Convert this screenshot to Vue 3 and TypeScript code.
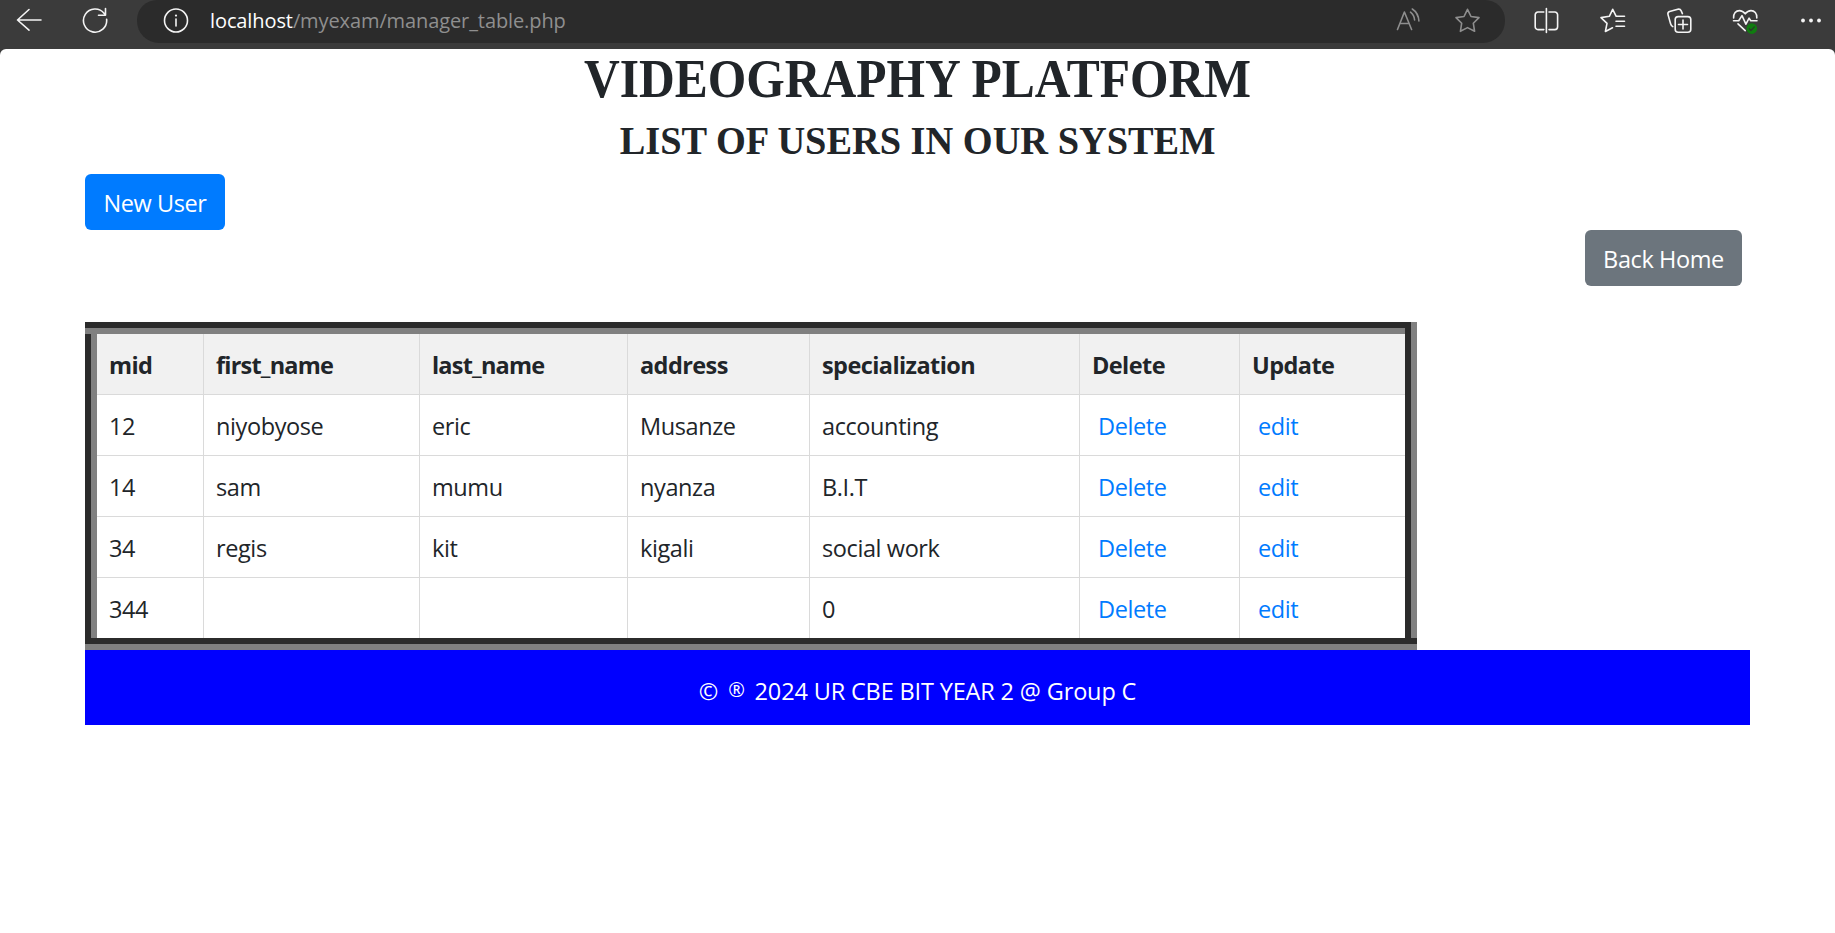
<script setup lang="ts">
interface Manager {
  mid: number
  firstName: string
  lastName: string
  address: string
  specialization: string
}

const columns: string[] = ['mid', 'first_name', 'last_name', 'address', 'specialization', 'Delete', 'Update']

const managers: Manager[] = [
  { mid: 12, firstName: 'niyobyose', lastName: 'eric', address: 'Musanze', specialization: 'accounting' },
  { mid: 14, firstName: 'sam', lastName: 'mumu', address: 'nyanza', specialization: 'B.I.T' },
  { mid: 34, firstName: 'regis', lastName: 'kit', address: 'kigali', specialization: 'social work' },
  { mid: 344, firstName: '', lastName: '', address: '', specialization: '0' },
]
</script>

<template>
  <div class="browser">
    <header class="toolbar">
      <div class="nav">
        <svg class="icon" viewBox="0 0 28 28"><path d="M14 3.5 2.5 14 14 24.2M2.5 14H26" /></svg>
        <svg class="icon" viewBox="0 0 28 28">
          <path d="M25.6 13.2A11.6 11.6 0 1 1 23.2 7.4L24.5 9.2M24.5 2.5V9.3H17.5" />
        </svg>
      </div>
      <div class="address">
        <svg class="icon" viewBox="0 0 28 28">
          <circle cx="14" cy="14.5" r="11.5" />
          <path d="M14 13v7" />
          <circle class="solid" cx="14" cy="9.6" r="1.1" />
        </svg>
        <span class="url"><span class="host">localhost</span>/myexam/manager_table.php</span>
        <svg class="icon dim" viewBox="0 0 28 28">
          <path d="M2.5 23.5 9.4 6 16.6 23.5M5 17.5h9.2M15.5 6.2Q19.3 9.3 19.6 14M17.3 3Q23.4 7 23.9 15" />
        </svg>
        <svg class="icon dim" viewBox="0 0 28 28">
          <path d="M13.5 3.3 17 10.5 25 11.6 19.3 17.2 20.6 25.3 13.5 21.6 6.4 25.3 7.7 17.2 2 11.6 10 10.5Z" />
        </svg>
      </div>
      <div class="actions">
        <svg class="icon" viewBox="0 0 28 28">
          <path d="M11.8 6H6a2.8 2.8 0 0 0-2.8 2.8v12A2.8 2.8 0 0 0 6 23.6h5.8M17 6h5.8a2.8 2.8 0 0 1 2.8 2.8v12a2.8 2.8 0 0 1-2.8 2.8H17M14.4 2.5v24" />
        </svg>
        <svg class="icon" viewBox="0 0 28 28">
          <path d="M14.5 21.8 7.4 25.5 9 17.3 3 11.6 11.3 10.3 14.7 3.3 18.2 10.3H26.5M18 15.2h8.5M18 20.2h8.5" />
        </svg>
        <svg class="icon" viewBox="0 0 28 28">
          <rect x="10.2" y="10.6" width="15.6" height="15.6" rx="3" />
          <path d="M18 14v9M13.5 18.5h9M7.8 20.6C6.6 20 6 19.2 5.6 17.8L3 8.6Q2.4 6.3 4.6 5.6L12.8 3.2Q15.2 2.6 16.2 4.8L17.4 7.6" />
        </svg>
        <svg class="icon" viewBox="0 0 28 28">
          <path d="M2.6 12C2.3 7.4 5 4.6 8.4 4.6 11 4.6 12.8 6 14.2 7.8 15.6 6 17.4 4.6 20 4.6c3.4 0 6.1 2.8 5.8 7.4M2.5 14.8h5.2l3.3-5.2 3.9 8.6 3.2-6 1.7 2.6H26M7 17.8l7.2 6.8" />
          <circle class="badge" cx="20.8" cy="22.6" r="5.3" />
          <path class="check" d="m18.3 22.8 1.7 1.7 3.4-3.6" />
        </svg>
        <svg class="icon" viewBox="0 0 28 28">
          <circle class="solid" cx="6" cy="14.5" r="1.9" />
          <circle class="solid" cx="14" cy="14.5" r="1.9" />
          <circle class="solid" cx="22" cy="14.5" r="1.9" />
        </svg>
      </div>
    </header>

    <main class="page">
      <h1 class="title">VIDEOGRAPHY PLATFORM</h1>
      <h2 class="subtitle">LIST OF USERS IN OUR SYSTEM</h2>

      <div class="container">
        <a class="btn primary">New User</a>
        <div class="home-row"><a class="btn secondary">Back Home</a></div>

        <div class="frame">
          <table class="grid">
            <colgroup>
              <col v-for="(name, i) in columns" :key="name" :class="'col-' + i" />
            </colgroup>
            <thead>
              <tr>
                <th v-for="name in columns" :key="name" :class="{ tight: name.includes('_') }">{{ name }}</th>
              </tr>
            </thead>
            <tbody>
              <tr v-for="m in managers" :key="m.mid">
                <td>{{ m.mid }}</td>
                <td>{{ m.firstName }}</td>
                <td>{{ m.lastName }}</td>
                <td>{{ m.address }}</td>
                <td>{{ m.specialization }}</td>
                <td><a class="link">Delete</a></td>
                <td><a class="link">edit</a></td>
              </tr>
            </tbody>
          </table>
        </div>

        <footer class="footer">© <span class="reg">®</span> 2024 UR CBE BIT YEAR 2 @ Group C</footer>
      </div>
    </main>
  </div>
</template>

<style>
body {
  background: #3b3b3b;
  overflow: hidden;
}
</style>

<style scoped>
.browser {
  box-sizing: border-box;
  height: 100vh;
  display: flex;
  flex-direction: column;
  background: #3b3b3b;
  font-family: 'Open Sans', 'Noto Sans', sans-serif;
}

.toolbar {
  flex: none;
  height: 49px;
  display: flex;
  align-items: flex-start;
}

.nav {
  display: flex;
  gap: 38px;
  padding: 6px 28px 0 15px;
}

.icon {
  flex: none;
  display: block;
  width: 28px;
  height: 28px;
  fill: none;
  stroke: #f4f4f4;
  stroke-width: 1.6;
  stroke-linecap: round;
  stroke-linejoin: round;
}

.icon.dim {
  stroke: #8e8e8e;
}

.icon .solid {
  fill: #f4f4f4;
  stroke: none;
}

.icon .badge {
  fill: #107c10;
  stroke: none;
}

.icon .check {
  stroke: #2b3b2b;
  stroke-width: 1.3;
}

.address {
  box-sizing: border-box;
  width: 1368px;
  height: 43px;
  padding: 6px 23px 0 25px;
  display: flex;
  border-radius: 20px 20px 22px 22px;
  background: #2b2b2b;
}

.address .dim + .dim {
  margin-left: 31px;
}

.url {
  flex: 1;
  margin-left: 20px;
  line-height: 29px;
  font-size: 20px;
  letter-spacing: -0.1px;
  color: #8f8f8f;
}

.host {
  color: #fff;
}

.actions {
  display: flex;
  gap: 38.3px;
  padding: 6px 0 0 27px;
}

.page {
  flex: 1;
  background: #fff;
  border-radius: 6px 6px 0 0;
  color: #212529;
}

.title,
.subtitle {
  margin: 0;
  text-align: center;
  white-space: nowrap;
  font-family: 'Liberation Serif', serif;
  font-weight: 700;
}

.title {
  font-size: 54px;
  line-height: 60px;
  height: 58px;
  transform: scaleX(0.917);
}

.subtitle {
  margin: 9px 0 8px;
  font-size: 40.5px;
  line-height: 50px;
  transform: scaleX(0.947);
}

.container {
  width: 1665px;
  margin: 0 auto;
  font-size: 23.5px;
}

.btn {
  box-sizing: border-box;
  display: block;
  height: 56px;
  padding-top: 1px;
  line-height: 56px;
  text-align: center;
  letter-spacing: -0.4px;
  color: #fff;
  border-radius: 6px;
}

.primary {
  width: 140px;
  background: #007bff;
}

.secondary {
  width: 157px;
  background: #6c757d;
}

.home-row {
  display: flex;
  justify-content: flex-end;
  padding-right: 8px;
}

/* Uneven two-tone ridge around the table: dark and grey bands meet squarely at the corners. */
.frame {
  box-sizing: border-box;
  width: 1332px;
  height: 328px;
  margin-top: 36px;
  padding: 12px;
  background:
    linear-gradient(#2b2b2b, #2b2b2b) 0 0 / 1326px 6px,
    linear-gradient(#808080, #808080) 1326px 0 / 6px 316px,
    linear-gradient(#808080, #808080) 0 322px / 100% 6px,
    linear-gradient(#2b2b2b, #2b2b2b) 0 316px / 100% 6px,
    linear-gradient(#2b2b2b, #2b2b2b) 1320px 6px / 6px 310px,
    linear-gradient(#808080, #808080) 0 6px / 1320px 6px,
    linear-gradient(#2b2b2b, #2b2b2b) 0 12px / 6px 304px,
    linear-gradient(#808080, #808080) 6px 12px / 6px 304px;
  background-repeat: no-repeat;
}

.grid {
  width: 1308px;
  table-layout: fixed;
  border-collapse: separate;
  border-spacing: 0;
}

.col-0 { width: 107px; }
.col-1 { width: 216px; }
.col-2 { width: 208px; }
.col-3 { width: 182px; }
.col-4 { width: 270px; }
.col-5 { width: 160px; }
.col-6 { width: 165px; }

.grid th,
.grid td {
  box-sizing: border-box;
  height: 61px;
  padding: 1px 0 0 12px;
  text-align: left;
  vertical-align: middle;
  line-height: 36px;
  letter-spacing: -0.4px;
  white-space: nowrap;
  border-right: 1px solid #dadada;
  border-bottom: 1px solid #dadada;
}

.grid th {
  background: #f1f1f1;
  letter-spacing: -0.58px;
}

.grid th.tight {
  letter-spacing: -0.8px;
}

.grid th:last-child,
.grid td:last-child {
  border-right: 0;
}

.grid tbody tr:last-child td {
  height: 60px;
  border-bottom: 0;
}

.link {
  margin-left: 6px;
  color: #007bff;
}

.footer {
  box-sizing: border-box;
  height: 75px;
  padding-top: 4px;
  line-height: 75px;
  text-align: center;
  letter-spacing: -0.15px;
  color: #fff;
  background: #00f;
}

.reg {
  display: inline-block;
  margin: 0 4px 0 4px;
  font-size: 20px;
  line-height: 1;
  vertical-align: 3px;
}
</style>
